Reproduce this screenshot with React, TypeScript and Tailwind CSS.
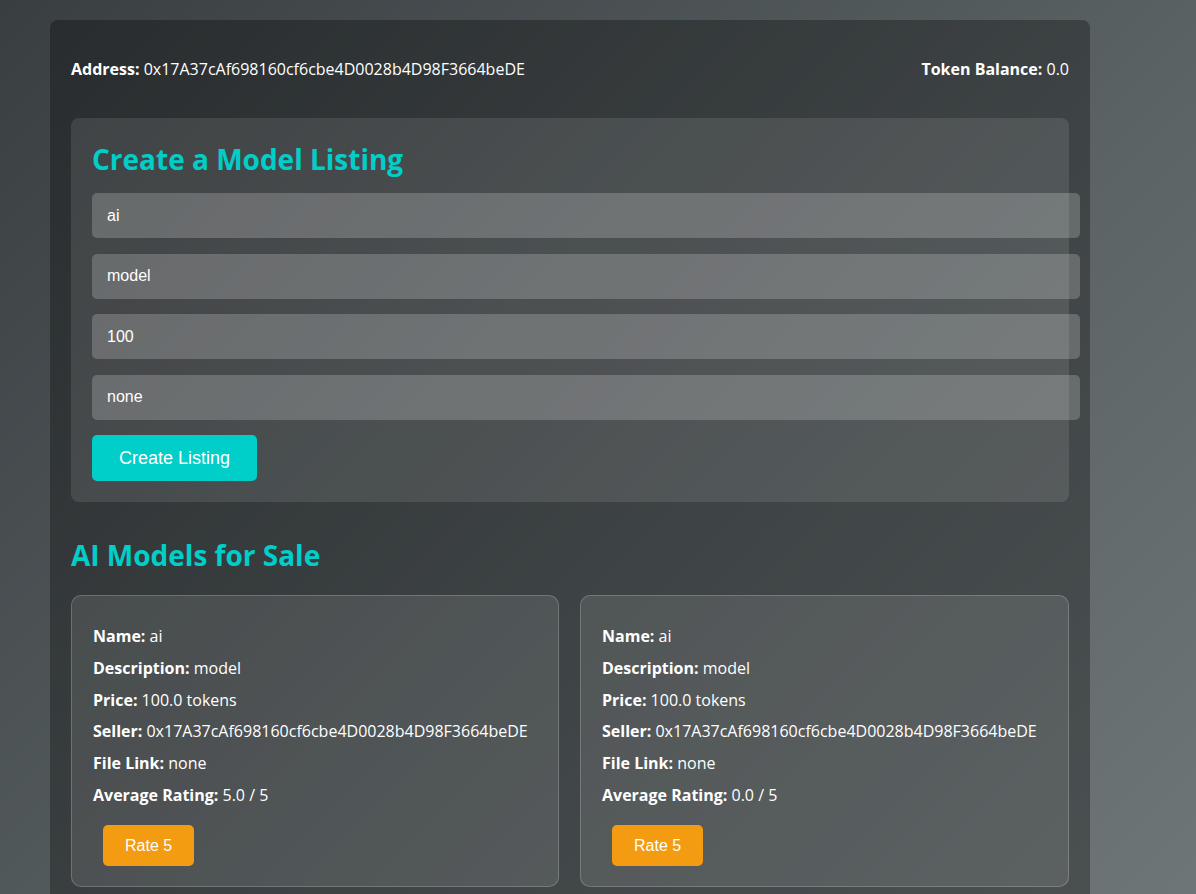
import { useState } from 'react';

const ADDRESS = '0x17A37cAf698160cf6cbe4D0028b4D98F3664beDE';

type Model = {
    name: string;
    description: string;
    price: string;
    seller: string;
    fileLink: string;
    rating: string;
};

const models: Model[] = [
    { name: 'ai', description: 'model', price: '100.0', seller: ADDRESS, fileLink: 'none', rating: '5.0' },
    { name: 'ai', description: 'model', price: '100.0', seller: ADDRESS, fileLink: 'none', rating: '0.0' },
];

const sans = "font-['Open_Sans','Noto_Sans',sans-serif]";

function Field({ value, onChange }: { value: string; onChange: (v: string) => void }) {
    return (
        <input
            type="text"
            value={value}
            onChange={(e) => onChange(e.target.value)}
            className="block w-[calc(100%+32px)] h-[45px] px-[15px] rounded-[5px] bg-white/20 text-white text-[16px] font-['Liberation_Sans',Arial,sans-serif] outline-none border-none"
        />
    );
}

function ModelCard({ model }: { model: Model }) {
    return (
        <div className="rounded-[10px] border border-white/20 bg-white/10 px-[21px] pt-[31px] pb-[20px]">
            <div className="space-y-[12.8px] text-[16px] leading-[19px] text-white">
                <p><strong>Name:</strong> {model.name}</p>
                <p><strong>Description:</strong> {model.description}</p>
                <p><strong>Price:</strong> {model.price} tokens</p>
                <p><strong>Seller:</strong> {model.seller}</p>
                <p><strong>File Link:</strong> {model.fileLink}</p>
                <p><strong>Average Rating:</strong> {model.rating} / 5</p>
            </div>
            <button className="mt-[20.5px] ml-[10px] h-[41px] px-[22px] rounded-[5px] bg-[#f39c12] text-white text-[16px] font-['Liberation_Sans',Arial,sans-serif]">
                Rate 5
            </button>
        </div>
    );
}

export default function App() {
    const [name, setName] = useState('ai');
    const [description, setDescription] = useState('model');
    const [price, setPrice] = useState('100');
    const [fileLink, setFileLink] = useState('none');

    return (
        <div className={`min-h-screen bg-[linear-gradient(135deg,#393e41_0%,#5b6365_60%,#6e7677_100%)] pt-[20px] pl-[50px] ${sans}`}>
            <div className="w-[1040px] rounded-t-[8px] bg-black/30 px-[21px] pt-[20px] pb-[40px] text-white">
                {/* Header */}
                <div className="flex justify-between py-[18px] text-[16px] leading-[22px]">
                    <div><strong>Address:</strong> {ADDRESS}</div>
                    <div><strong>Token Balance:</strong> 0.0</div>
                </div>

                {/* Create form */}
                <div className="mt-[20px] rounded-[8px] bg-white/10 px-[21px] pt-[23px] pb-[21px]">
                    <h2 className="text-[28px] leading-[36px] font-bold text-[#00cec9] mb-[16px]">Create a Model Listing</h2>
                    <div className="flex flex-col gap-[15.5px]">
                        <Field value={name} onChange={setName} />
                        <Field value={description} onChange={setDescription} />
                        <Field value={price} onChange={setPrice} />
                        <Field value={fileLink} onChange={setFileLink} />
                    </div>
                    <button className="mt-[15.5px] h-[46px] px-[27px] rounded-[5px] bg-[#00cec9] text-white text-[18px] font-['Liberation_Sans',Arial,sans-serif]">
                        Create Listing
                    </button>
                </div>

                {/* Listings */}
                <h2 className="mt-[35px] text-[28px] leading-[36px] font-bold text-[#00cec9]">AI Models for Sale</h2>
                <div className="mt-[22px] grid grid-cols-[488px_489px] gap-[21px]">
                    {models.map((m, i) => (
                        <ModelCard key={i} model={m} />
                    ))}
                </div>
            </div>
        </div>
    );
}
